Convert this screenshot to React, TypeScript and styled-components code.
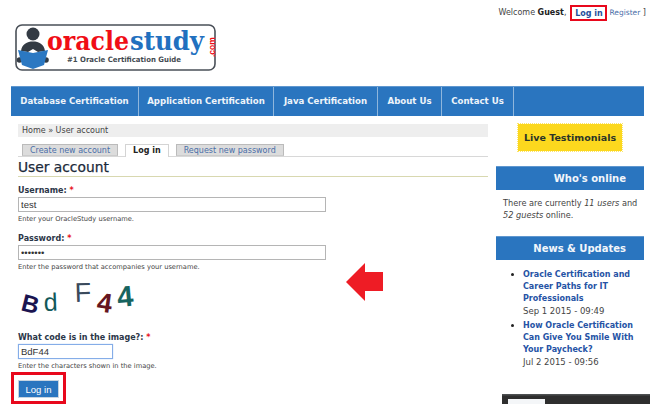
import React from 'react';
import styled, { createGlobalStyle } from 'styled-components';

const GlobalStyle = createGlobalStyle`
  html, body {
    margin: 0;
    padding: 0;
    background: #fff;
    overflow: hidden;
    font-family: 'DejaVu Sans', Verdana, sans-serif;
    color: #333;
  }
`;

const navItems = [
  { label: 'Database Certification', width: 128 },
  { label: 'Application Certification', width: 135 },
  { label: 'Java Certification', width: 104 },
  { label: 'About Us', width: 64 },
  { label: 'Contact Us', width: 72 },
];

const Logo = () => (
  <svg width="202" height="47" viewBox="0 0 202 47">
    <rect x="1" y="1" width="199" height="45" rx="6" fill="#fff" stroke="#4a5058" strokeWidth="1.6" />
    <circle cx="18" cy="10" r="6.500" fill="#333b44" />
    <path d="M6 27 C7 20 12 17.500 18 17.500 C24 17.500 29 20 30 27 L23 28 L18 25 L13 28 Z" fill="#333b44" />
    <circle cx="4.500" cy="36" r="2.800" fill="#333b44" />
    <circle cx="31" cy="36" r="2.800" fill="#333b44" />
    <path d="M3 26 L18 29 L33 26 L29 41 L18 45 L7 41 Z" fill="#2b78c2" />
    <text x="32" y="26" fontFamily="'DejaVu Serif', serif" fontWeight="700" fontSize="26" fill="#f00d16" textLength="82" lengthAdjust="spacingAndGlyphs">oracle</text>
    <text x="115" y="26" fontFamily="'DejaVu Serif', serif" fontWeight="700" fontSize="26" fill="#2170bf" textLength="74" lengthAdjust="spacingAndGlyphs">study</text>
    <text transform="translate(200 33) rotate(-90)" fontFamily="'Liberation Sans', sans-serif" fontWeight="700" fontSize="8.500" fill="#f00d16">.com</text>
    <text x="52" y="38" fontFamily="'DejaVu Sans', sans-serif" fontWeight="700" fontSize="7.300" fill="#444b52" textLength="114" lengthAdjust="spacingAndGlyphs">#1 Oracle Certification Guide</text>
  </svg>
);

const Captcha = () => (
  <svg width="130" height="46" viewBox="0 0 130 46">
    <text transform="translate(2 33) rotate(14)" fontFamily="'Liberation Sans', sans-serif" fontWeight="700" fontSize="24" fill="#1a1450">B</text>
    <text transform="translate(26 34) rotate(-2)" fontFamily="'Liberation Sans', sans-serif" fontSize="25" fill="#12595a">d</text>
    <text transform="translate(57 25) rotate(-2)" fontFamily="'Liberation Sans', sans-serif" fontSize="27" fill="#3a4a5c">F</text>
    <text transform="translate(78 34) rotate(8)" fontFamily="'Liberation Sans', sans-serif" fontWeight="700" fontSize="27" fill="#651520">4</text>
    <text transform="translate(100 30) rotate(-5)" fontFamily="'Liberation Sans', sans-serif" fontWeight="700" fontSize="29" fill="#17645f">4</text>
  </svg>
);

export default function App() {
  return (
    <Page>
      <GlobalStyle />
      <TopLine>
        Welcome <strong>Guest</strong>,<LoginLink>Log in</LoginLink>
        <RegisterLink>Register</RegisterLink> ]
      </TopLine>
      <LogoWrap>
        <Logo />
      </LogoWrap>
      <Nav>
        {navItems.map((item) => (
          <NavItem key={item.label} $width={item.width}>
            {item.label}
          </NavItem>
        ))}
      </Nav>
      <Columns>
        <Main>
          <Breadcrumb>Home » User account</Breadcrumb>
          <Tabs>
            <Tab>Create new account</Tab>
            <Tab $active>Log in</Tab>
            <Tab>Request new password</Tab>
          </Tabs>
          <Title>User account</Title>
          <FirstField>
            <Label>
              Username: <Star>*</Star>
            </Label>
            <Input readOnly value="test" />
            <Hint>Enter your OracleStudy username.</Hint>
          </FirstField>
          <Field>
            <Label>
              Password: <Star>*</Star>
            </Label>
            <Input readOnly value="•••••••" />
            <Hint>Enter the password that accompanies your username.</Hint>
          </Field>
          <CaptchaRow>
            <Captcha />
            <ArrowWrap>
              <svg width="38" height="38" viewBox="0 0 38 38">
                <path d="M19 0 L0 19 L19 38 L19 28 L37 28 L37 9 L19 9 Z" fill="#ee1c25" />
              </svg>
            </ArrowWrap>
          </CaptchaRow>
          <Field>
            <Label>
              What code is in the image?: <Star>*</Star>
            </Label>
            <CodeInput readOnly value="BdF44" />
            <Hint>Enter the characters shown in the image.</Hint>
          </Field>
          <SubmitFrame>
            <Submit>Log in</Submit>
          </SubmitFrame>
        </Main>
        <Sidebar>
          <Testimonials>Live Testimonials</Testimonials>
          <BlockTitle>Who's online</BlockTitle>
          <OnlineText>
            There are currently <em>11 users</em> and <em>52 guests</em> online.
          </OnlineText>
          <BlockTitle>News &amp; Updates</BlockTitle>
          <NewsList>
            <li>
              <NewsLink>Oracle Certification and Career Paths for IT Professionals</NewsLink>
              <NewsDate>Sep 1 2015 - 09:49</NewsDate>
            </li>
            <li>
              <NewsLink>How Oracle Certification Can Give You Smile With Your Paycheck?</NewsLink>
              <NewsDate>Jul 2 2015 - 09:56</NewsDate>
            </li>
          </NewsList>
          <DarkBox>
            <DarkButton />
          </DarkBox>
        </Sidebar>
      </Columns>
    </Page>
  );
}

const Page = styled.div`
  width: 660px;
  height: 404px;
  overflow: hidden;
  display: flex;
  flex-direction: column;
`;

const TopLine = styled.div`
  flex: none;
  height: 24px;
  padding: 5px 14px 0 0;
  box-sizing: border-box;
  display: flex;
  justify-content: flex-end;
  align-items: flex-start;
  font-size: 8px;
  line-height: 16px;
  white-space: pre;
  color: #444;

  strong {
    color: #222;
  }
`;

const LoginLink = styled.span`
  box-sizing: border-box;
  height: 16px;
  width: 37px;
  margin: 0 2px 0 4px;
  text-align: center;
  border: 2px solid #e8081c;
  line-height: 13px;
  font-weight: 700;
  color: #1f4f9c;
`;

const RegisterLink = styled.span`
  font-size: 7.500px;
  color: #4a6ea8;
`;

const LogoWrap = styled.div`
  flex: none;
  height: 62px;
  padding-left: 15px;
`;

const Nav = styled.nav`
  flex: none;
  margin-left: 11px;
  width: 633px;
  height: 30px;
  display: flex;
  background: #2a75bf;
  border-top: 1px solid #5f97cf;
  box-sizing: border-box;
`;

const NavItem = styled.div<{ $width: number }>`
  width: ${(p) => p.$width}px;
  box-sizing: border-box;
  border-right: 1px solid #8fb6dc;
  text-align: center;
  font-size: 8.600px;
  font-weight: 700;
  line-height: 29px;
  color: #eef4fa;
  white-space: nowrap;
`;

const Columns = styled.div`
  flex: none;
  display: flex;
  margin-left: 18px;
  margin-top: 8px;
`;

const Main = styled.main`
  width: 470px;
  flex: none;
`;

const Breadcrumb = styled.div`
  height: 13px;
  background: #eeeeee;
  padding-left: 4px;
  font-size: 8px;
  line-height: 14px;
  color: #444;
`;

const Tabs = styled.div`
  display: flex;
  gap: 7px;
  margin-top: 7px;
  padding-left: 4px;
  height: 12px;
  border-bottom: 1px solid #d8d8d8;
`;

const Tab = styled.div<{ $active?: boolean }>`
  box-sizing: border-box;
  height: ${(p) => (p.$active ? 13 : 12)}px;
  padding: 0 7px;
  font-size: 8px;
  line-height: 11px;
  font-weight: ${(p) => (p.$active ? 700 : 400)};
  color: ${(p) => (p.$active ? '#222' : '#4a6ea8')};
  background: ${(p) => (p.$active ? '#fff' : '#dcdcdc')};
  border: 1px solid ${(p) => (p.$active ? '#d4d4d4' : '#bbb')};
  border-bottom: ${(p) => (p.$active ? 'none' : '1px solid #ccc')};
`;

const Title = styled.h1`
  margin: 0;
  height: 19px;
  font-size: 13.800px;
  font-weight: 400;
  line-height: 21px;
  -webkit-text-stroke: 0.25px #1c2a3a;
  color: #1c2a3a;
  border-bottom: 1px solid #d8d8b0;
`;

const Field = styled.div`
  margin-top: 7px;
`;

const FirstField = styled(Field)`
  margin-top: 6px;
`;

const Label = styled.div`
  height: 14px;
  font-size: 8px;
  font-weight: 700;
  line-height: 16px;
  color: #2b3648;
`;

const Star = styled.span`
  color: #e8141c;
`;

const Input = styled.input`
  display: block;
  box-sizing: border-box;
  width: 308px;
  height: 15px;
  margin: 0;
  padding: 0 2px;
  border: 1px solid #b5b5b5;
  outline: none;
  font-family: 'Liberation Sans', sans-serif;
  font-size: 9.500px;
  color: #333;
`;

const CodeInput = styled(Input)`
  width: 95px;
  border: 1px solid #85ade8;
  box-shadow: 0 0 1px #9fc3f2;
`;

const Hint = styled.div`
  margin-top: 3px;
  font-size: 6.700px;
  line-height: 9px;
  color: #444;
`;

const CaptchaRow = styled.div`
  position: relative;
  height: 46px;
  margin-top: 5px;
`;

const ArrowWrap = styled.div`
  position: absolute;
  left: 328px;
  top: -14px;
`;

const SubmitFrame = styled.div`
  box-sizing: border-box;
  width: 55px;
  height: 32px;
  margin: 1px 0 0 -7px;
  padding: 5px 4px;
  border: 3px solid #e8081c;
`;

const Submit = styled.button`
  display: block;
  width: 41px;
  height: 18px;
  margin: 0;
  padding: 0;
  border: 1px solid #c8d4e0;
  background: #2a75bf;
  color: #fff;
  font-family: 'Liberation Sans', sans-serif;
  font-size: 9.500px;
`;

const Sidebar = styled.aside`
  width: 148px;
  margin-left: 8px;
  flex: none;
  position: relative;
`;

const Testimonials = styled.div`
  width: 104px;
  height: 27px;
  margin: 0 0 15px 22px;
  background: #fcd81e;
  outline: 1px dotted #fce66a;
  text-align: center;
  font-size: 9.500px;
  font-weight: 700;
  line-height: 27px;
  color: #2a3428;
  white-space: nowrap;
`;

const BlockTitle = styled.h2`
  margin: 0;
  height: 24px;
  box-sizing: border-box;
  padding-right: 18px;
  background: #2a75bf;
  border-top: 1px solid #5f97cf;
  text-align: right;
  font-size: 10px;
  font-weight: 700;
  line-height: 23px;
  color: #f2f6fb;
`;

const OnlineText = styled.p`
  margin: 7px 0 15px 7px;
  font-size: 8.200px;
  line-height: 12px;
  color: #444;
`;

const NewsList = styled.ul`
  margin: 8px 0 0;
  padding: 0 0 0 27px;
  font-size: 8.500px;
  line-height: 12px;
  color: #222;

  li {
    margin-bottom: 2px;
  }
`;

const NewsLink = styled.div`
  font-size: 8px;
  font-weight: 700;
  color: #2653a5;
`;

const NewsDate = styled.div`
  color: #444;
`;

const DarkBox = styled.div`
  position: absolute;
  left: 6px;
  top: 270px;
  width: 148px;
  height: 12px;
  background: linear-gradient(#55585a, #2e2e2e 20%);
`;

const DarkButton = styled.div`
  position: absolute;
  left: 6px;
  top: 5px;
  width: 37px;
  height: 7px;
  background: #f4f6f8;
`;
